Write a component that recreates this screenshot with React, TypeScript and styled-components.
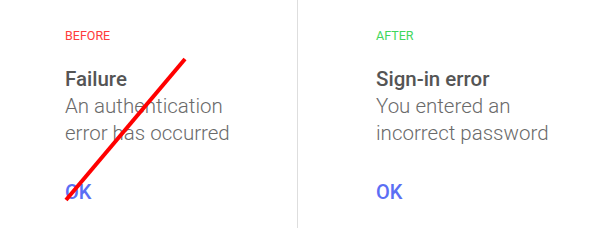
import React from "react";
import styled, { createGlobalStyle } from "styled-components";

const GlobalStyle = createGlobalStyle`
  html, body {
    margin: 0;
    padding: 0;
    background: #ffffff;
    font-family: Roboto, "Liberation Sans", sans-serif;
  }
`;

interface IPanel {
  padLeft: number;
  divider?: boolean;
}

interface ILabel {
  tone: string;
}

const Page = styled.div`
  display: flex;
  width: 599px;
  height: 228px;
  overflow: hidden;
`;

const Panel = styled.div<IPanel>`
  position: relative;
  display: flex;
  flex-direction: column;
  width: ${(props) => (props.divider ? "298px" : "auto")};
  flex: ${(props) => (props.divider ? "none" : "1")};
  box-sizing: border-box;
  padding: 28px 0 0 ${(props) => props.padLeft}px;
  border-right: ${(props) => (props.divider ? "1px solid #dedede" : "none")};
`;

const Label = styled.div<ILabel>`
  font-size: 12.5px;
  line-height: 15px;
  color: ${(props) => props.tone};
`;

const Title = styled.div`
  margin-top: 24px;
  font-size: 20.5px;
  line-height: 24px;
  font-weight: 500;
  color: #555555;
`;

const Message = styled.div`
  margin-top: 1.5px;
  font-size: 20.5px;
  line-height: 27px;
  font-weight: 300;
  color: #6a6a6a;
`;

const OkButton = styled.div`
  margin-top: 33.5px;
  font-size: 20px;
  line-height: 24px;
  font-weight: 500;
  color: #5b6ef4;
`;

const Strike = styled.svg`
  position: absolute;
  left: 0;
  top: 0;
  pointer-events: none;
`;

export default function App() {
  return (
    <>
      <GlobalStyle />
      <Page>
        <Panel padLeft={65} divider>
          <Label tone="#ff3b3b">BEFORE</Label>
          <Title>Failure</Title>
          <Message>
            An authentication
            <br />
            error has occurred
          </Message>
          <OkButton>OK</OkButton>
          <Strike width="297" height="228" viewBox="0 0 297 228">
            <line x1="66" y1="200" x2="185" y2="59" stroke="#ff0000" strokeWidth="4" />
          </Strike>
        </Panel>
        <Panel padLeft={78}>
          <Label tone="#3fd65c">AFTER</Label>
          <Title>Sign-in error</Title>
          <Message>
            You entered an
            <br />
            incorrect password
          </Message>
          <OkButton>OK</OkButton>
        </Panel>
      </Page>
    </>
  );
}
